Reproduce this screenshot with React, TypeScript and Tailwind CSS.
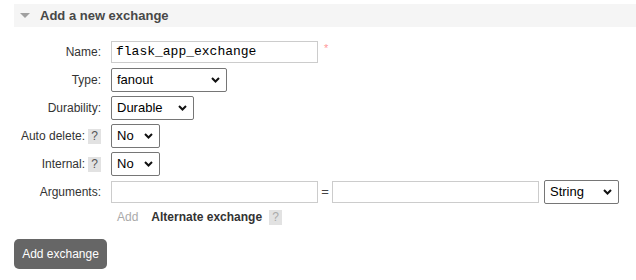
import { ReactNode } from "react"

const Chevron = () => (
  <svg width="9" height="6" viewBox="0 0 9 6" className="shrink-0">
    <path d="M1 1 L4.5 4.5 L8 1" fill="none" stroke="#111" strokeWidth="2" />
  </svg>
)

const Select = ({ value, width }: { value: string; width: string }) => (
  <div
    className={`${width} h-[24px] flex items-center justify-between pl-[5px] pr-[6px] border border-[#767676] rounded-[2px] bg-white text-[13px] text-black`}
  >
    <span>{value}</span>
    <Chevron />
  </div>
)

const Help = ({ light }: { light?: boolean }) => (
  <span
    className={`inline-flex items-center justify-center w-[13px] h-[15px] bg-[#e2e2e2] text-[12px] leading-none ${
      light ? "text-[#aaa]" : "text-[#555]"
    }`}
  >
    ?
  </span>
)

const Row = ({ label, help, children }: { label: string; help?: boolean; children: ReactNode }) => (
  <div className="flex items-center h-[24px]">
    <div className="w-[97px] pr-[10px] flex items-center justify-end gap-[3px] text-[12px] text-[#333]">
      <span>{label}</span>
      {help && <Help />}
    </div>
    {children}
  </div>
)

export default function App() {
  return (
    <div className="w-[636px] h-[280px] bg-white pt-[4px] font-['Liberation_Sans',Arial,sans-serif]">
      <div className="ml-[14px] h-[23px] bg-[#f5f5f5] flex items-center pl-[6px] gap-[10px]">
        <svg width="10" height="6" viewBox="0 0 10 6">
          <path d="M0 0 H10 L5 5 Z" fill="#a0a0a0" />
        </svg>
        <span className="text-[13px] font-bold text-[#484848]">Add a new exchange</span>
      </div>

      <div className="ml-[14px] mt-[13px] flex flex-col gap-[4px]">
        <Row label="Name:">
          <div className="w-[207px] h-[22px] border border-[#ccc] bg-white flex items-center pl-[4px] font-['Liberation_Mono',monospace] text-[13px] text-black">
            flask_app_exchange
          </div>
          <span className="ml-[6px] -mt-[8px] text-[11px] text-[#f99]">*</span>
        </Row>
        <Row label="Type:">
          <Select value="fanout" width="w-[116px]" />
        </Row>
        <Row label="Durability:">
          <Select value="Durable" width="w-[83px]" />
        </Row>
        <Row label="Auto delete:" help>
          <Select value="No" width="w-[49px]" />
        </Row>
        <Row label="Internal:" help>
          <Select value="No" width="w-[49px]" />
        </Row>
        <Row label="Arguments:">
          <div className="w-[207px] h-[22px] border border-[#ccc] bg-white" />
          <span className="w-[14px] text-center text-[13px] text-[#444]">=</span>
          <div className="w-[207px] h-[22px] border border-[#ccc] bg-white" />
          <div className="ml-[5px]">
            <Select value="String" width="w-[75px]" />
          </div>
        </Row>
        <div className="flex items-center h-[18px] pl-[103px] text-[12px]">
          <span className="text-[#aaa]">Add</span>
          <span className="ml-[13px] font-bold text-[#333]">Alternate exchange</span>
          <span className="ml-[7px]">
            <Help light />
          </span>
        </div>
      </div>

      <button className="ml-[14px] mt-[13px] w-[93px] h-[30px] rounded-[5px] bg-[#666] text-white text-[12px]">
        Add exchange
      </button>
    </div>
  )
}
